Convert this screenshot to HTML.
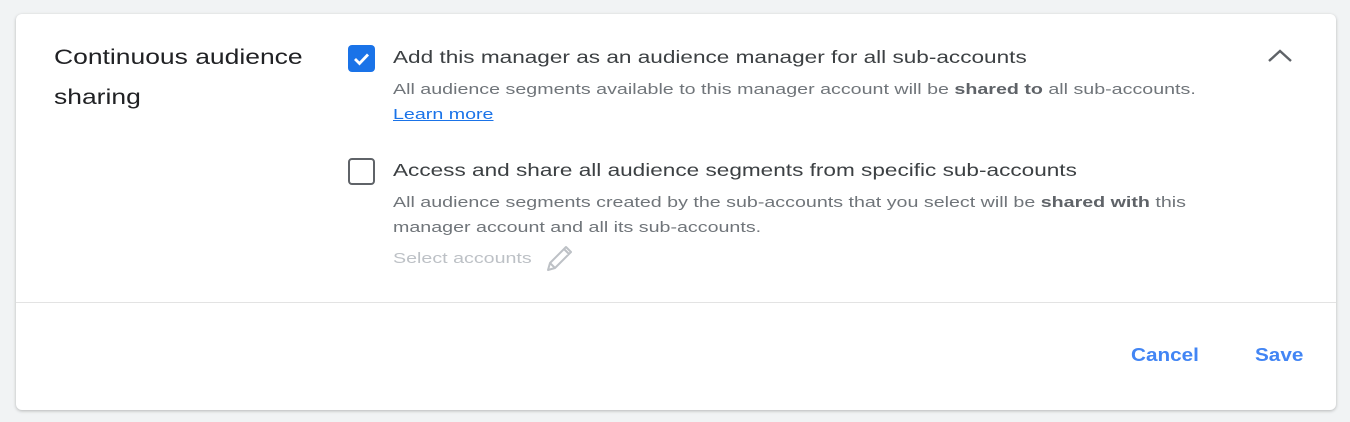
<!DOCTYPE html>
<html><head><style>
body{margin:0;background:#f1f3f4;font-family:"Liberation Sans",Arial,sans-serif;width:1350px;height:422px;position:relative;overflow:hidden}
.card{position:absolute;left:16px;top:14px;width:1320px;height:396px;background:#fff;border-radius:6px;box-shadow:0 1px 3px rgba(0,0,0,.25)}
.abs{position:absolute;white-space:nowrap;transform-origin:0 0}
.lbl{left:38px;top:24px;font-size:21px;color:#202124;line-height:40px;transform:scaleX(1.26)}
.cb{position:absolute;width:27px;height:27px;border-radius:4px;box-sizing:border-box}
.t{font-size:17.5px;color:#3c4043;transform:scaleX(1.29)}
.d{font-size:15px;color:#70757a;line-height:25px;transform:scaleX(1.31)}
.d b{color:#5f6368}
.div{position:absolute;left:0;right:0;top:288px;height:1px;background:#e3e3e3}
.btn{font-size:18px;color:#4285f4;font-weight:bold;top:331px;transform:scaleX(1.15)}
</style></head><body>
<div class="card">
<div class="abs lbl">Continuous audience<br>sharing</div>
<div class="cb" style="left:332px;top:31px;background:#1a73e8">
<svg width="27" height="27" viewBox="0 0 27 27"><path d="M7 14l4.5 4.5 8.5-9" stroke="#fff" stroke-width="2.8" fill="none"/></svg></div>
<div class="abs t" style="left:377px;top:33px">Add this manager as an audience manager for all sub-accounts</div>
<div class="abs d" style="left:377px;top:63px">All audience segments available to this manager account will be <b>shared to</b> all sub-accounts.<br><span style="color:#1a73e8;text-decoration:underline">Learn more</span></div>
<div class="cb" style="left:332px;top:144px;border:2.5px solid #5f6368"></div>
<div class="abs t" style="left:377px;top:146px">Access and share all audience segments from specific sub-accounts</div>
<div class="abs d" style="left:377px;top:176px">All audience segments created by the sub-accounts that you select will be <b>shared with</b> this<br>manager account and all its sub-accounts.</div>
<div class="abs d" style="left:377px;top:232px;color:#bdc1c6">Select accounts</div>
<svg class="abs" style="left:528px;top:229px" width="32" height="32" viewBox="0 0 32 32"><path d="M4 27l2-7 16-16 5 5-16 16z M20 6l5 5 M6 20l5 5" stroke="#bdc1c6" stroke-width="2" fill="none" stroke-linejoin="round"/></svg>
<svg class="abs" style="left:1250px;top:33px" width="28" height="20" viewBox="0 0 28 20"><path d="M3 14l11-10 11 10" stroke="#5f6368" stroke-width="2.4" fill="none"/></svg>
<div class="div"></div>
<div class="abs btn" style="left:1115px">Cancel</div>
<div class="abs btn" style="left:1239px">Save</div>
</div>
</body></html>
